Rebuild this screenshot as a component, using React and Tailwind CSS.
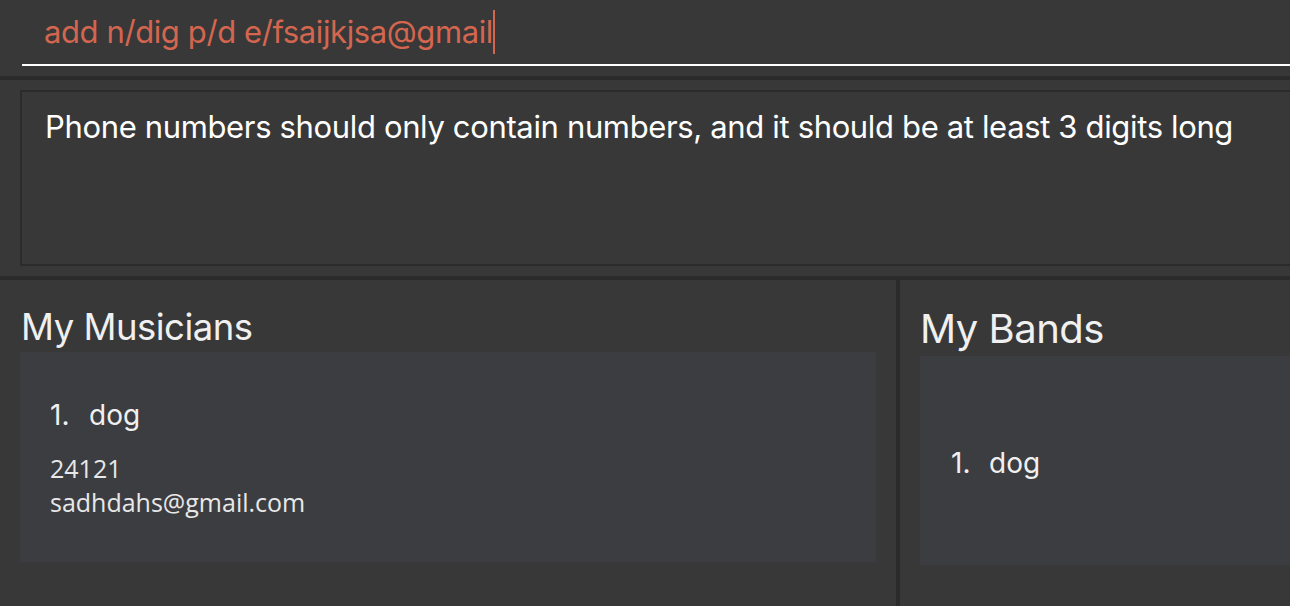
import { useState } from "react";

const persons = [{ name: "dog", phone: "24121", email: "sadhdahs@gmail.com" }];
const bands = [{ name: "dog" }];

export default function App() {
  const [command, setCommand] = useState("add n/dig p/d e/fsaijkjsa@gmail");

  return (
    <div className="w-[1290px] h-[606px] overflow-hidden bg-[#383838] flex flex-col font-['Inter',sans-serif]">
      {/* command box */}
      <div className="h-[76px] pl-[22px] pt-[4px] shrink-0">
        <div className="h-[62px] border-b-2 border-white flex items-center pl-[22px]">
          <span className="text-[#d4664f] text-[31px] tracking-[-0.4px] -mt-[4px]">{command}</span>
          <span className="w-[2px] h-[44px] bg-[#d4664f] -mt-[4px]" />
        </div>
      </div>
      <div className="h-[4px] bg-[#2b2b2b] shrink-0" />

      {/* result display */}
      <div className="h-[196px] pl-[20px] pt-[10px] shrink-0">
        <div className="h-[176px] border-2 border-r-0 border-[#2b2b2b] pl-[23px] pt-[12px]">
          <p className="text-white text-[31px] tracking-[-0.35px]">
            Phone numbers should only contain numbers, and it should be at least 3 digits long
          </p>
        </div>
      </div>
      <div className="h-[4px] bg-[#2b2b2b] shrink-0" />

      {/* lists */}
      <div className="flex flex-1">
        <div className="w-[896px] pl-[20px] pr-[20px] pt-[22px]">
          <h2 className="text-[#f0f0f0] text-[36.5px] tracking-[-0.5px] leading-[50px] pl-[1px]">My Musicians</h2>
          {persons.map((p, i) => (
            <div key={i} className="bg-[#3c3d40] h-[210px] pl-[30px] pt-[45px]">
              <div className="flex text-[#f0f0f0] text-[28px] leading-[36px]">
                <span className="w-[39px]">{i + 1}.</span>
                <span>{p.name}</span>
              </div>
              <div className="mt-[18px] text-[#e8e8e8] text-[25px] leading-[34px] font-['Open_Sans',sans-serif]">
                <div>{p.phone}</div>
                <div>{p.email}</div>
              </div>
            </div>
          ))}
        </div>
        <div className="w-[4px] bg-[#2b2b2b]" />
        <div className="flex-1 pl-[20px] pt-[22px]">
          <h2 className="text-[#f0f0f0] text-[40px] tracking-[-0.5px] leading-[54px]">My Bands</h2>
          {bands.map((b, i) => (
            <div key={i} className="bg-[#3c3d40] h-[209px] pl-[31px] pt-[89px]">
              <div className="flex text-[#f0f0f0] text-[28px] leading-[36px]">
                <span className="w-[38px]">{i + 1}.</span>
                <span>{b.name}</span>
              </div>
            </div>
          ))}
        </div>
      </div>
    </div>
  );
}
